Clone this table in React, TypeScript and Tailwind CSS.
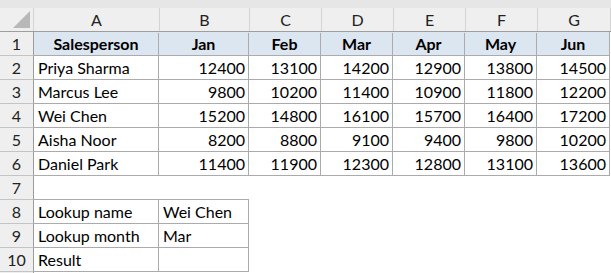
const cols = [
  { key: "A", w: "w-[126px]" },
  { key: "B", w: "w-[90px]" },
  { key: "C", w: "w-[72px]" },
  { key: "D", w: "w-[72px]" },
  { key: "E", w: "w-[72px]" },
  { key: "F", w: "w-[72px]" },
  { key: "G", w: "w-[73px]" },
];

const months = ["Jan", "Feb", "Mar", "Apr", "May", "Jun"];

const sales: [string, number[]][] = [
  ["Priya Sharma", [12400, 13100, 14200, 12900, 13800, 14500]],
  ["Marcus Lee", [9800, 10200, 11400, 10900, 11800, 12200]],
  ["Wei Chen", [15200, 14800, 16100, 15700, 16400, 17200]],
  ["Aisha Noor", [8200, 8800, 9100, 9400, 9800, 10200]],
  ["Daniel Park", [11400, 11900, 12300, 12800, 13100, 13600]],
];

const lookup = [
  ["Lookup name", "Wei Chen"],
  ["Lookup month", "Mar"],
  ["Result", ""],
];

function RowHead({ n }: { n: number }) {
  return (
    <div className="flex h-6 w-[34px] shrink-0 items-center justify-center border-r border-b border-r-[#9c9c9c] border-b-[#c4c4c4] bg-[#efefef] pt-px text-[#222]">
      {n}
    </div>
  );
}

export default function App() {
  return (
    <div className="h-[273px] w-[611px] overflow-hidden bg-white font-['Lato','Liberation_Sans',sans-serif] text-[16px] leading-none text-black">
      <div className="h-2 bg-[#e6e6e6]" />

      {/* column letters */}
      <div className="flex h-6 border-b border-[#9e9e9e] bg-[#efefef] text-[#222]">
        <div className="relative w-[34px] shrink-0 border-r border-[#d4d4d4]">
          <svg className="absolute left-[13px] top-[3px]" width="17" height="17" viewBox="0 0 17 17">
            <polygon points="17,0 17,17 0,17" fill="#b8b8b8" />
          </svg>
        </div>
        {cols.map((c) => (
          <div key={c.key} className={`${c.w} flex shrink-0 items-center justify-center border-r border-[#d4d4d4] pt-px`}>
            {c.key}
          </div>
        ))}
      </div>

      {/* header row */}
      <div className="flex">
        <RowHead n={1} />
        <div className="flex h-6 items-center border-r border-b border-[#ababab] bg-[#dce6f1] pt-px font-bold">
          <div className="flex h-full w-[125px] items-center justify-center border-r border-[#ababab]">Salesperson</div>
          <div className="flex h-full w-[90px] items-center justify-center border-r border-[#ababab]">Jan</div>
          {months.slice(1).map((m, i) => (
            <div
              key={m}
              className={`flex h-full items-center justify-center ${i === 4 ? "w-[72px]" : "w-[72px] border-r border-[#ababab]"}`}
            >
              {m}
            </div>
          ))}
        </div>
      </div>

      {sales.map(([name, vals], r) => (
        <div key={name} className="flex">
          <RowHead n={r + 2} />
          <div className="flex h-6 w-[125px] shrink-0 items-center border-r border-b border-[#ababab] pt-px pl-1">{name}</div>
          {vals.map((v, i) => (
            <div
              key={i}
              className={`flex h-6 shrink-0 items-center justify-end border-r border-b border-[#ababab] pt-px pr-[3px] ${
                i === 0 ? "w-[90px]" : i === 5 ? "w-[73px]" : "w-[72px]"
              }`}
            >
              {v}
            </div>
          ))}
        </div>
      ))}

      {/* blank row 7 */}
      <div className="flex">
        <RowHead n={7} />
        <div className="h-6 w-[125px] border-b border-[#ababab]" />
        <div className="h-6 w-[90px] border-b border-[#ababab]" />
      </div>

      {lookup.map(([label, value], r) => (
        <div key={label} className="flex">
          <RowHead n={r + 8} />
          <div className="flex h-6 w-[125px] shrink-0 items-center border-r border-b border-[#ababab] pt-px pl-1">{label}</div>
          <div className="flex h-6 w-[90px] shrink-0 items-center border-r border-b border-[#ababab] pt-px pl-1">{value}</div>
        </div>
      ))}
      <div className="flex">
        <div className="h-6 w-[34px] shrink-0 border-r border-[#9c9c9c] bg-[#efefef]" />
      </div>
    </div>
  );
}
